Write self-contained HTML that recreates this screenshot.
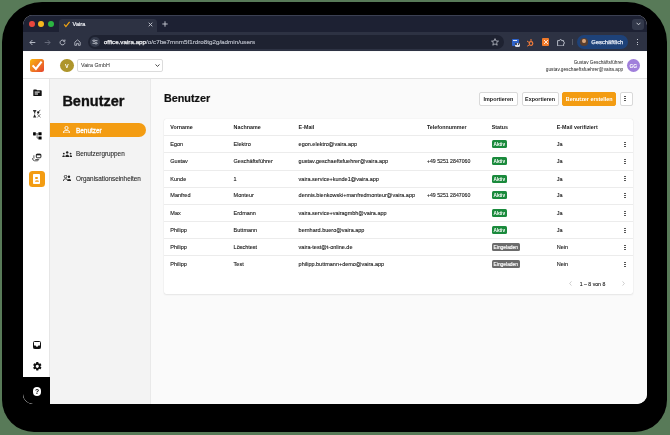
<!DOCTYPE html>
<html><head><meta charset="utf-8">
<style>
*{box-sizing:border-box;margin:0;padding:0}
html,body{width:670px;height:435px;overflow:hidden}
body{position:relative;background:#587a58;font-family:"Liberation Sans",sans-serif;color:#222}
.a{position:absolute}
.n{white-space:nowrap}
#shadow{left:2.3px;top:2px;width:664.7px;height:430px;background:#000;border-radius:40px 40px 32px 32px}
#win{left:23px;top:15px;width:624px;height:389px;border-radius:10px;overflow:hidden;background:#fafafa;will-change:transform}
#pg{left:-23px;top:-15px;width:670px;height:435px}
.dot{width:5.8px;height:5.8px;border-radius:50%}
.tc{font-size:5.5px;line-height:6px;color:#222;-webkit-text-stroke:0.12px #222;white-space:nowrap;position:absolute}
.th{font-size:5.35px;line-height:6px;color:#222;font-weight:bold;white-space:nowrap;position:absolute}
.rb{position:absolute;left:163.5px;width:469.5px;height:1px;background:#ececec}
.badge{position:absolute;left:491.7px;height:8px;border-radius:1.5px;color:#fff;font-size:4.7px;line-height:9px;font-weight:bold;text-align:center;white-space:nowrap}
.ok{width:15.2px;background:#1a8a3c}
.inv{width:28.2px;background:#6b6b6b;font-weight:normal;font-size:4.9px;-webkit-text-stroke:0.15px #fff}
.keb{position:absolute;left:624.3px;width:1.4px;height:5.4px;background:repeating-linear-gradient(#555 0 1.1px,transparent 1.1px 2.1px)}
.btn{position:absolute;top:92.4px;height:13.3px;border:1px solid #d9d9d9;border-radius:2px;background:#fff;font-size:5.4px;line-height:12.5px;text-align:center;font-weight:bold;color:#222;white-space:nowrap}
</style></head><body>
<div id="shadow" class="a"></div>
<div id="win" class="a"><div id="pg" class="a">
  <!-- tab strip -->
  <div class="a" style="left:23px;top:15px;width:624px;height:17.3px;background:#1d2133;border-top:0.6px solid #3b4052"></div>
  <div class="a dot" style="left:28.9px;top:21.3px;background:#e9473d"></div>
  <div class="a dot" style="left:38.3px;top:21.3px;background:#f4b71e"></div>
  <div class="a dot" style="left:48px;top:21.3px;background:#2bb441"></div>
  <div class="a" style="left:58.9px;top:18.8px;width:98.1px;height:13.6px;background:#2d3243;border-radius:3.5px 3.5px 0 0"></div>
  <svg class="a" style="left:62.6px;top:20.8px" width="8" height="7" viewBox="0 0 8 7"><path d="M1.2 3.4 L2.9 5.6 L6.6 0.9" fill="none" stroke="#f0a514" stroke-width="1.25"/></svg>
  <div class="a n" style="left:72.6px;top:21.2px;color:#eceef3;font-size:5.6px;line-height:6px;-webkit-text-stroke:0.2px #eceef3">Vaira</div>
  <svg class="a" style="left:147.5px;top:22px" width="5" height="5" viewBox="0 0 5 5"><path d="M0.7 0.7 L4.3 4.3 M4.3 0.7 L0.7 4.3" stroke="#c9ccd5" stroke-width="0.9"/></svg>
  <svg class="a" style="left:161.7px;top:21px" width="6" height="6" viewBox="0 0 6 6"><path d="M3 0.3 V5.7 M0.3 3 H5.7" stroke="#c9ccd5" stroke-width="0.9"/></svg>
  <div class="a" style="left:632px;top:18.6px;width:11.8px;height:11.1px;border-radius:3px;background:#33394b"></div>
  <svg class="a" style="left:635.5px;top:22.3px" width="5" height="4" viewBox="0 0 5 4"><path d="M0.6 0.8 L2.5 2.8 L4.4 0.8" fill="none" stroke="#d5d8e0" stroke-width="0.9"/></svg>
  <!-- toolbar -->
  <div class="a" style="left:23px;top:32.3px;width:624px;height:19.2px;background:#2d3243"></div>
  <svg class="a" style="left:28.7px;top:38.7px" width="7" height="7" viewBox="0 0 7 7"><path d="M6.3 3.5 H1 M3.4 1 L0.9 3.5 L3.4 6" fill="none" stroke="#c4c8d2" stroke-width="0.9"/></svg>
  <svg class="a" style="left:44.2px;top:38.7px" width="7" height="7" viewBox="0 0 7 7"><path d="M0.7 3.5 H6 M3.6 1 L6.1 3.5 L3.6 6" fill="none" stroke="#6c7180" stroke-width="0.9"/></svg>
  <svg class="a" style="left:59.1px;top:38.7px" width="7" height="7" viewBox="0 0 7 7"><path d="M5.9 3.5 A2.4 2.4 0 1 1 5.2 1.8" fill="none" stroke="#c4c8d2" stroke-width="0.9"/><path d="M5.9 0.6 V2.3 H4.2" fill="none" stroke="#c4c8d2" stroke-width="0.9"/></svg>
  <svg class="a" style="left:74.2px;top:38.5px" width="7" height="7" viewBox="0 0 7 7"><path d="M0.8 3.2 L3.5 0.9 L6.2 3.2 V6.3 H4.4 V4.4 H2.6 V6.3 H0.8 Z" fill="none" stroke="#c4c8d2" stroke-width="0.8"/></svg>
  <div class="a" style="left:88.4px;top:35px;width:416px;height:13.5px;border-radius:7px;background:#1e2231"></div>
  <div class="a" style="left:90.3px;top:37px;width:9.6px;height:9.6px;border-radius:50%;background:#343a4b"></div>
  <svg class="a" style="left:92.3px;top:39px" width="6" height="6" viewBox="0 0 6 6"><path d="M0.5 1.7 H5.5 M0.5 4.3 H5.5" stroke="#d0d3dc" stroke-width="0.8"/><circle cx="2" cy="1.7" r="0.9" fill="#343a4b" stroke="#d0d3dc" stroke-width="0.7"/><circle cx="4" cy="4.3" r="0.9" fill="#343a4b" stroke="#d0d3dc" stroke-width="0.7"/></svg>
  <div class="a n" style="left:103.8px;top:38.7px;font-size:6.25px;line-height:6.5px;color:#f2f3f6;-webkit-text-stroke:0.25px #f2f3f6">office.vaira.app<span style="color:#b4b8c3;-webkit-text-stroke:0.2px #b4b8c3">/o/c7be7mnm5f1rdro8tg2g/admin/users</span></div>
  <svg class="a" style="left:490.5px;top:38.3px" width="8" height="8" viewBox="0 0 8 8"><path d="M4 0.6 L5 3 L7.5 3.1 L5.6 4.7 L6.2 7.2 L4 5.9 L1.8 7.2 L2.4 4.7 L0.5 3.1 L3 3 Z" fill="none" stroke="#c4c8d2" stroke-width="0.75"/></svg>
  <div class="a" style="left:511.9px;top:39.2px;width:7.2px;height:7px;background:#2e62c9;border-radius:0.8px"></div>
  <div class="a" style="left:512.8px;top:40px;width:4px;height:1.2px;background:#dfe7f7"></div>
  <div class="a" style="left:514.5px;top:42.6px;width:5.6px;height:4.4px;background:#d9dde6;border-radius:1.5px"></div>
  <div class="a" style="left:515.4px;top:43.4px;width:1.4px;height:1.4px;background:#2d3243;border-radius:50%"></div>
  <div class="a" style="left:517.6px;top:43.4px;width:1.4px;height:1.4px;background:#2d3243;border-radius:50%"></div>
  <svg class="a" style="left:526px;top:37.5px" width="9" height="9" viewBox="0 0 9 9"><circle cx="5" cy="5.5" r="1.8" fill="none" stroke="#f07b3a" stroke-width="1.2"/><path d="M5 3.7 V1 M3.6 6.8 L1.2 8.2 M3.3 4.6 L1 3" stroke="#f07b3a" stroke-width="1"/></svg>
  <div class="a" style="left:541.8px;top:38px;width:7.6px;height:7.6px;background:#f07a2a;border-radius:1px"></div>
  <svg class="a" style="left:542.5px;top:38.8px" width="6" height="6" viewBox="0 0 6 6"><path d="M1 1 L5 5 M5 1 L1 5" stroke="#fff" stroke-width="0.8"/></svg>
  <svg class="a" style="left:557px;top:38.8px" width="8" height="7.4" viewBox="0 0 8 7.4"><path d="M0.6 1.6 H2.6 Q2.6 0.5 3.6 0.5 Q4.6 0.5 4.6 1.6 H6.6 V3 Q7.5 3 7.5 3.9 Q7.5 4.8 6.6 4.8 V6.9 H0.6 Z" fill="none" stroke="#c4c8d2" stroke-width="0.9"/></svg>
  <div class="a" style="left:571.6px;top:39px;width:0.8px;height:6px;background:#555a68"></div>
  <div class="a" style="left:576.5px;top:35px;width:51.5px;height:14px;border-radius:7px;background:#1e4279"></div>
  <div class="a" style="left:580px;top:38.2px;width:7.6px;height:7.6px;border-radius:50%;background:#5a3f2f"></div>
  <div class="a" style="left:582px;top:39px;width:3.6px;height:4px;border-radius:50%;background:#d8a57a"></div>
  <div class="a n" style="left:591.2px;top:39px;color:#e3e9f5;font-size:5.85px;line-height:6.5px;-webkit-text-stroke:0.25px #e3e9f5">Geschäftlich</div>
  <div class="a" style="left:636.8px;top:38.9px;width:1.2px;height:6.2px;background:repeating-linear-gradient(#c4c8d2 0 1.2px,transparent 1.2px 2.5px)"></div>
  <!-- content -->
  <div class="a" style="left:23px;top:51.5px;width:624px;height:353px;background:#fafafa"></div>
  <!-- header -->
  <div class="a" style="left:23px;top:51.5px;width:624px;height:27.4px;background:#fff;border-bottom:1px solid #e3e3e3"></div>
  <div class="a" style="left:30px;top:58.9px;width:13.5px;height:13px;border-radius:2.5px;background:linear-gradient(135deg,#f9b80b,#f07e22 50%,#e5432e)"></div>
  <svg class="a" style="left:31px;top:60px" width="12" height="11" viewBox="0 0 12 11"><path d="M1.6 5.4 L4.9 8.9 L10.6 1.6" fill="none" stroke="#fff" stroke-width="2.1"/></svg>
  <div class="a" style="left:60px;top:59px;width:13.5px;height:13px;border-radius:50%;background:#ae952b"></div>
  <div class="a n" style="left:60px;top:62.5px;width:13.5px;text-align:center;color:#fff;font-size:5.5px;line-height:6px;font-weight:bold">V</div>
  <div class="a" style="left:77.2px;top:58.7px;width:86.1px;height:13px;border-radius:2px;border:1px solid #dcdcdc;background:#fff"></div>
  <div class="a n" style="left:81px;top:62.4px;font-size:5.3px;line-height:6px;color:#222">Vaira GmbH</div>
  <svg class="a" style="left:154.8px;top:64px" width="5" height="3" viewBox="0 0 5 3"><path d="M0.5 0.5 L2.5 2.4 L4.5 0.5" fill="none" stroke="#333" stroke-width="0.9"/></svg>
  <div class="a n" style="left:500px;width:123.2px;top:60.1px;font-size:4.7px;line-height:5.5px;color:#222;text-align:right">Gustav Geschäftsführer</div>
  <div class="a n" style="left:500px;width:123.2px;top:66.9px;font-size:4.75px;line-height:5.5px;color:#222;text-align:right">gustav.geschaeftsfuehrer@vaira.app</div>
  <div class="a" style="left:626.8px;top:59px;width:13px;height:13px;border-radius:50%;background:#a07fdb"></div>
  <div class="a n" style="left:626.8px;top:62.7px;width:13px;text-align:center;color:#fff;font-size:5px;line-height:6px;font-weight:bold">GG</div>
  <!-- rail -->
  <div class="a" style="left:23px;top:79.3px;width:26.8px;height:325px;background:#fff;border-right:1px solid #e6e6e6"></div>
  <div class="a" style="left:23px;top:377.3px;width:26.8px;height:27px;background:#000"></div>
  <!-- sidebar -->
  <div class="a" style="left:49.8px;top:79.3px;width:100.8px;height:325px;background:#f3f3f3;border-right:1px solid #e9e9e9"></div>
  <div class="a n" style="left:62.4px;top:92.5px;font-size:14.5px;line-height:16px;font-weight:bold;color:#111;-webkit-text-stroke:0.35px #111">Benutzer</div>
  <div class="a" style="left:49.8px;top:122.8px;width:96.2px;height:14.1px;background:#f39c12;border-radius:0 7px 7px 0"></div>
  <div class="a n" style="left:76px;top:126.5px;font-size:6.45px;line-height:7px;color:#fff;-webkit-text-stroke:0.3px #fff">Benutzer</div>
  <div class="a n" style="left:76px;top:150.3px;font-size:6.35px;line-height:7px;color:#2a2a2a;-webkit-text-stroke:0.1px #2a2a2a">Benutzergruppen</div>
  <div class="a n" style="left:76px;top:174.5px;font-size:6.35px;line-height:7px;color:#2a2a2a;-webkit-text-stroke:0.1px #2a2a2a">Organisationseinheiten</div>
  <!-- main -->
  <div class="a n" style="left:163.9px;top:92px;font-size:10.8px;line-height:12px;font-weight:bold;color:#111;-webkit-text-stroke:0.2px #111">Benutzer</div>
  <div class="btn" style="left:479.2px;width:38.4px">Importieren</div>
  <div class="btn" style="left:521.5px;width:37.2px">Exportieren</div>
  <div class="btn" style="left:562.4px;width:53.7px;background:#f39c12;border-color:#f39c12;color:#fff">Benutzer erstellen</div>
  <div class="btn" style="left:619.8px;width:13.3px"></div>
  <div class="keb" style="top:96.3px"></div>
  <!-- card -->
  <div class="a" style="left:163.5px;top:118.8px;width:469.5px;height:175.2px;background:#fff;border-radius:2px;box-shadow:0 0 1px rgba(0,0,0,.16),0 1px 2px rgba(0,0,0,.07)"></div>
<!-- ICONS -->
  <svg class="a" style="left:32.5px;top:88.5px" width="9" height="7.5" viewBox="0 0 9 7.5"><path d="M0.3 1.2 Q0.3 0.4 1.1 0.4 H3.3 L4.1 1.2 H7.9 Q8.7 1.2 8.7 2 V6.5 Q8.7 7.2 7.9 7.2 H1.1 Q0.3 7.2 0.3 6.5 Z" fill="#111"/><rect x="1.7" y="2.6" width="5" height="1" fill="#fff"/><rect x="1.7" y="4.5" width="3.3" height="1" fill="#fff"/></svg>
  <svg class="a" style="left:31px;top:108px" width="12" height="12" viewBox="0 0 12 12"><path d="M2.1 1.9 H5.3 V3 Q5.3 3.7 4.3 3.8 V5.6 H3.1 V3.8 Q2.1 3.7 2.1 3 Z" fill="#333"/><path d="M3.6 6 L2.1 9.4 Q2.1 9.6 2.4 9.6 H5 Q5.2 9.6 5.1 9.3 Z" fill="#222"/><circle cx="7.2" cy="4.5" r="1.15" fill="#111"/><path d="M7.9 3.7 L9.2 1.9" stroke="#333" stroke-width="0.8"/><path d="M6.2 6.1 L9.5 9.4 M9.5 6.1 L6.3 9.5" stroke="#555" stroke-width="0.75"/></svg>
  <svg class="a" style="left:32.5px;top:131.6px" width="9" height="8" viewBox="0 0 9 8"><rect x="0.1" y="0.2" width="2.7" height="3.2" rx="0.3" fill="#000"/><rect x="5.4" y="0.3" width="3.2" height="3" rx="0.3" fill="#000"/><rect x="5.4" y="4.4" width="3.2" height="3.1" rx="0.3" fill="#000"/><path d="M2.9 1.8 H5.5 M4.1 1.8 V6.1 H5.5" fill="none" stroke="#333" stroke-width="0.7"/></svg>
  <svg class="a" style="left:32px;top:153px" width="9.5" height="8.5" viewBox="0 0 9.5 8.5"><rect x="4.3" y="1.1" width="4.6" height="3.7" rx="0.8" fill="none" stroke="#111" stroke-width="0.9"/><rect x="4.3" y="1.1" width="4.6" height="1.2" fill="#111"/><path d="M1.9 2.3 V5.6 M0.4 5.2 Q0.6 7.6 2.6 7.8 H5.7 L6.8 6.5 H3.3" fill="none" stroke="#444" stroke-width="0.9"/></svg>
  <div class="a" style="left:28.6px;top:170.8px;width:16.3px;height:16.4px;border-radius:3.5px;background:#f39c12"></div>
  <div class="a" style="left:33px;top:174px;width:7.4px;height:10.2px;border-radius:0.8px;background:#fff"></div>
  <div class="a" style="left:35.4px;top:176.9px;width:2.4px;height:2.4px;border-radius:50%;background:#f39c12"></div>
  <div class="a" style="left:34.6px;top:180.3px;width:4.2px;height:2px;border-radius:2px 2px 0 0;background:#f6b04a"></div>
  <svg class="a" style="left:33px;top:341px" width="8" height="8" viewBox="0 0 8 8"><rect x="0.5" y="0.5" width="7" height="7" rx="1" fill="none" stroke="#111" stroke-width="1"/><path d="M0.5 4.6 H2.6 Q3 5.8 4 5.8 Q5 5.8 5.4 4.6 H7.5 V7.5 H0.5 Z" fill="#111"/></svg>
  <svg class="a" style="left:31.7px;top:361.4px" width="10.6" height="10.6" viewBox="0 0 24 24"><path fill="#111" d="M19.14 12.94c.04-.3.06-.61.06-.94 0-.32-.02-.64-.07-.94l2.03-1.58a.49.49 0 0 0 .12-.61l-1.92-3.32a.488.488 0 0 0-.59-.22l-2.39.96c-.5-.38-1.03-.7-1.62-.94l-.36-2.54a.484.484 0 0 0-.48-.41h-3.84c-.24 0-.43.17-.47.41l-.36 2.54c-.59.24-1.13.57-1.62.94l-2.39-.96c-.22-.08-.47 0-.59.22L2.74 8.87c-.12.21-.08.47.12.61l2.03 1.58c-.05.3-.09.63-.09.94s.02.64.07.94l-2.03 1.58a.49.49 0 0 0-.12.61l1.92 3.32c.12.22.37.29.59.22l2.39-.96c.5.38 1.03.7 1.62.94l.36 2.54c.05.24.24.41.48.41h3.84c.24 0 .44-.17.47-.41l.36-2.54c.59-.24 1.13-.56 1.62-.94l2.39.96c.22.08.47 0 .59-.22l1.92-3.32c.12-.22.07-.47-.12-.61l-2.01-1.58zM12 15.6c-1.98 0-3.6-1.62-3.6-3.6s1.62-3.6 3.6-3.6 3.6 1.62 3.6 3.6-1.62 3.6-3.6 3.6z"/></svg>
  <div class="a" style="left:32.8px;top:387.3px;width:8.6px;height:8.6px;border-radius:50%;background:#fff"></div>
  <div class="a n" style="left:32.8px;top:388.6px;width:8.6px;text-align:center;font-size:6.8px;line-height:6px;font-weight:bold;color:#000">?</div>
  <svg class="a" style="left:63.4px;top:126px" width="7" height="7.4" viewBox="0 0 7 7.4"><circle cx="3.5" cy="2" r="1.6" fill="none" stroke="#fff" stroke-width="0.9"/><path d="M0.5 7 V6.2 Q0.5 4.6 2.2 4.6 H4.8 Q6.5 4.6 6.5 6.2 V7 Z" fill="none" stroke="#fff" stroke-width="0.9"/></svg>
  <svg class="a" style="left:61.8px;top:150.6px" width="10.4" height="6.4" viewBox="0 0 10.4 6.4"><circle cx="5.2" cy="1.4" r="1.2" fill="#222"/><circle cx="1.8" cy="2.6" r="0.9" fill="#222"/><circle cx="8.6" cy="2.6" r="0.9" fill="#222"/><path d="M3.2 6.2 Q3.2 3.4 5.2 3.4 Q7.2 3.4 7.2 6.2 Z M0.2 6.2 Q0.2 4.2 1.8 4.2 Q2.8 4.2 2.9 6.2 Z M7.5 6.2 Q7.6 4.2 8.6 4.2 Q10.2 4.2 10.2 6.2 Z" fill="#222"/></svg>
  <svg class="a" style="left:62.8px;top:175px" width="8.4" height="6.4" viewBox="0 0 8.4 6.4"><circle cx="2.6" cy="1.6" r="1.3" fill="none" stroke="#222" stroke-width="0.8"/><path d="M0.3 6.1 Q0.3 3.8 2.6 3.8 Q4.9 3.8 4.9 6.1" fill="none" stroke="#222" stroke-width="0.8"/><circle cx="6" cy="1.8" r="1.2" fill="#222"/><path d="M4.6 6.2 Q4.6 3.9 6 3.9 Q8.2 3.9 8.2 6.2 Z" fill="#222"/></svg>
  <!-- /ICONS -->
  <!-- TABLE -->
  <div class="th" style="left:170.3px;top:124.00px">Vorname</div>
  <div class="th" style="left:233.6px;top:124.00px">Nachname</div>
  <div class="th" style="left:298.6px;top:124.00px">E-Mail</div>
  <div class="th" style="left:426.9px;top:124.00px">Telefonnummer</div>
  <div class="th" style="left:491.7px;top:124.00px">Status</div>
  <div class="th" style="left:556.7px;top:124.00px">E-Mail verifiziert</div>
  <div class="rb" style="top:134.90px"></div>
  <div class="tc" style="left:170.3px;top:141.30px">Egon</div>
  <div class="tc" style="left:233.6px;top:141.30px">Elektro</div>
  <div class="tc" style="left:298.6px;top:141.30px">egon.elektro@vaira.app</div>
  <div class="badge ok" style="top:140.30px">Aktiv</div>
  <div class="tc" style="left:556.7px;top:141.30px">Ja</div>
  <div class="keb" style="top:142.10px"></div>
  <div class="rb" style="top:152.00px"></div>
  <div class="tc" style="left:170.3px;top:158.40px">Gustav</div>
  <div class="tc" style="left:233.6px;top:158.40px">Geschäftsführer</div>
  <div class="tc" style="left:298.6px;top:158.40px">gustav.geschaeftsfuehrer@vaira.app</div>
  <div class="tc" style="left:426.9px;top:158.40px;font-size:5.2px">+49 5251 2847060</div>
  <div class="badge ok" style="top:157.40px">Aktiv</div>
  <div class="tc" style="left:556.7px;top:158.40px">Ja</div>
  <div class="keb" style="top:159.20px"></div>
  <div class="rb" style="top:169.70px"></div>
  <div class="tc" style="left:170.3px;top:175.50px">Kunde</div>
  <div class="tc" style="left:233.6px;top:175.50px">1</div>
  <div class="tc" style="left:298.6px;top:175.50px">vaira.service+kunde1@vaira.app</div>
  <div class="badge ok" style="top:174.50px">Aktiv</div>
  <div class="tc" style="left:556.7px;top:175.50px">Ja</div>
  <div class="keb" style="top:176.30px"></div>
  <div class="rb" style="top:186.60px"></div>
  <div class="tc" style="left:170.3px;top:192.40px">Manfred</div>
  <div class="tc" style="left:233.6px;top:192.40px">Monteur</div>
  <div class="tc" style="left:298.6px;top:192.40px">dennis.bienkowski+manfredmonteur@vaira.app</div>
  <div class="tc" style="left:426.9px;top:192.40px;font-size:5.2px">+49 5251 2847060</div>
  <div class="badge ok" style="top:191.40px">Aktiv</div>
  <div class="tc" style="left:556.7px;top:192.40px">Ja</div>
  <div class="keb" style="top:193.20px"></div>
  <div class="rb" style="top:203.80px"></div>
  <div class="tc" style="left:170.3px;top:209.80px">Max</div>
  <div class="tc" style="left:233.6px;top:209.80px">Erdmann</div>
  <div class="tc" style="left:298.6px;top:209.80px">vaira.service+vairagmbh@vaira.app</div>
  <div class="badge ok" style="top:208.80px">Aktiv</div>
  <div class="tc" style="left:556.7px;top:209.80px">Ja</div>
  <div class="keb" style="top:210.60px"></div>
  <div class="rb" style="top:221.10px"></div>
  <div class="tc" style="left:170.3px;top:226.80px">Philipp</div>
  <div class="tc" style="left:233.6px;top:226.80px">Buttmann</div>
  <div class="tc" style="left:298.6px;top:226.80px">bernhard.buero@vaira.app</div>
  <div class="badge ok" style="top:225.80px">Aktiv</div>
  <div class="tc" style="left:556.7px;top:226.80px">Ja</div>
  <div class="keb" style="top:227.60px"></div>
  <div class="rb" style="top:238.00px"></div>
  <div class="tc" style="left:170.3px;top:243.80px">Philipp</div>
  <div class="tc" style="left:233.6px;top:243.80px">Löschtest</div>
  <div class="tc" style="left:298.6px;top:243.80px">vaira-test@t-online.de</div>
  <div class="badge inv" style="top:242.80px">Eingeladen</div>
  <div class="tc" style="left:556.7px;top:243.80px">Nein</div>
  <div class="keb" style="top:244.60px"></div>
  <div class="rb" style="top:254.80px"></div>
  <div class="tc" style="left:170.3px;top:261.00px">Philipp</div>
  <div class="tc" style="left:233.6px;top:261.00px">Test</div>
  <div class="tc" style="left:298.6px;top:261.00px">philipp.buttmann+demo@vaira.app</div>
  <div class="badge inv" style="top:260.00px">Eingeladen</div>
  <div class="tc" style="left:556.7px;top:261.00px">Nein</div>
  <div class="keb" style="top:261.80px"></div>
  <div class="tc" style="left:579.8px;top:280.5px;font-size:5.15px">1 – 8 von 8</div>
  <svg class="a" style="left:568.6px;top:281.0px" width="3" height="5" viewBox="0 0 3 5"><path d="M2.5 0.4 L0.6 2.5 L2.5 4.6" fill="none" stroke="#bbb" stroke-width="0.7"/></svg>
  <svg class="a" style="left:621.8px;top:281.0px" width="3" height="5" viewBox="0 0 3 5"><path d="M0.5 0.4 L2.4 2.5 L0.5 4.6" fill="none" stroke="#bbb" stroke-width="0.7"/></svg>
  <!-- /TABLE -->
</div></div>
</body></html>
